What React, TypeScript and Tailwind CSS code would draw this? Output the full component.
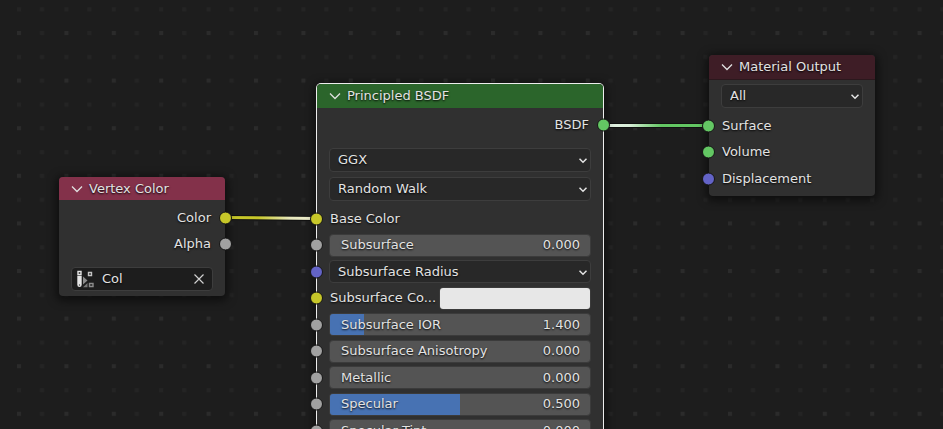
import React from "react";

type Tone = "yellow" | "gray" | "green" | "violet";

const toneClass: Record<Tone, string> = {
  yellow: "bg-[#c7c729]",
  gray: "bg-[#a1a1a1]",
  green: "bg-[#63c763]",
  violet: "bg-[#6363c7]",
};

function Socket({ tone, side }: { tone: Tone; side: "left" | "right" }) {
  return (
    <span
      className={`absolute top-1/2 size-[13px] -translate-y-1/2 rounded-full border border-[#151515] ${
        side === "left" ? "-left-[7px]" : "-right-[7px]"
      } ${toneClass[tone]}`}
    />
  );
}

function Header({ title, color }: { title: string; color: string }) {
  return (
    <header className={`flex items-center gap-1 pl-3 ${color}`}>
      <button type="button" aria-label={`Collapse ${title}`} className="flex size-3 items-center justify-center">
        <svg width="12" height="12" viewBox="0 0 12 12" fill="none" stroke="#e0e0e0" strokeWidth="1.3">
          <path d="M1 3.5 6 8.5 11 3.5" />
        </svg>
      </button>
      <h2 className="pl-[2px]">{title}</h2>
    </header>
  );
}

function Dropdown({ label, value, height }: { label: string; value: string; height: string }) {
  return (
    <div className="relative">
      <select
        aria-label={label}
        defaultValue={value}
        className={`block w-full appearance-none rounded border border-[#3d3d3d] bg-[#282828] pr-6 pl-2 outline-none text-shadow-[0_1px_2px_#000] ${height}`}
      >
        <option>{value}</option>
      </select>
      <svg
        className="pointer-events-none absolute top-1/2 right-1 -translate-y-1/2"
        width="8"
        height="8"
        viewBox="0 0 8 8"
        fill="none"
        stroke="#e6e6e6"
        strokeWidth="1.5"
      >
        <path d="M.5 2.7 4 6.2 7.5 2.7" />
      </svg>
    </div>
  );
}

function ValueField({ label, value, fill }: { label: string; value: string; fill: number }) {
  return (
    <label className="relative flex h-[23px] items-center overflow-hidden rounded border border-[#3b3b3b] bg-[#545454] pr-[10px] pl-[11px]">
      <span className="absolute inset-y-0 left-0 bg-[#4772b3]" style={{ width: `${fill}%` }} />
      <span className="relative flex-1 whitespace-nowrap">{label}</span>
      <input
        type="text"
        inputMode="decimal"
        defaultValue={value}
        className="relative w-12 bg-transparent text-right outline-none text-shadow-[0_1px_2px_#000]"
      />
    </label>
  );
}

const inputs: { tone: Tone; label: string; kind: "label" | "value" | "select" | "color"; value?: string; fill?: number }[] = [
  { tone: "yellow", label: "Base Color", kind: "label" },
  { tone: "gray", label: "Subsurface", kind: "value", value: "0.000", fill: 0 },
  { tone: "violet", label: "Subsurface Radius", kind: "select" },
  { tone: "yellow", label: "Subsurface Co...", kind: "color", value: "#e7e7e7" },
  { tone: "gray", label: "Subsurface IOR", kind: "value", value: "1.400", fill: 13 },
  { tone: "gray", label: "Subsurface Anisotropy", kind: "value", value: "0.000", fill: 0 },
  { tone: "gray", label: "Metallic", kind: "value", value: "0.000", fill: 0 },
  { tone: "gray", label: "Specular", kind: "value", value: "0.500", fill: 50 },
  { tone: "gray", label: "Specular Tint", kind: "value", value: "0.000", fill: 0 },
];

function InputRow({ row }: { row: (typeof inputs)[number] }) {
  return (
    <li className="relative flex items-center px-3 odd:h-[27px] even:h-[26px]">
      <Socket tone={row.tone} side="left" />
      <div className="w-full">
        {row.kind === "label" && <span className="block pl-px">{row.label}</span>}
        {row.kind === "value" && <ValueField label={row.label} value={row.value ?? ""} fill={row.fill ?? 0} />}
        {row.kind === "select" && <Dropdown label={row.label} value={row.label} height="h-[23px]" />}
        {row.kind === "color" && (
          <label className="flex items-center justify-between pl-px">
            {row.label}
            <input
              type="color"
              defaultValue={row.value}
              className="block h-[23px] w-[152px] appearance-none overflow-hidden rounded border border-[#3b3b3b] bg-[#e7e7e7] p-0 [&::-webkit-color-swatch]:border-0 [&::-webkit-color-swatch-wrapper]:p-0"
            />
          </label>
        )}
      </div>
    </li>
  );
}

function Canvas() {
  const dim = "#242424";
  return (
    <svg className="absolute inset-0 size-full" aria-hidden="true">
      <defs>
        <pattern id="dots" x="17" y="31" width="47.4" height="47.6" patternUnits="userSpaceOnUse">
          <rect width="4" height="4" fill="#2b2b2b" />
          <rect x="23" width="4" height="4" fill={dim} />
          <rect y="24" width="4" height="4" fill={dim} />
          <rect x="23" y="24" width="4" height="4" fill={dim} />
        </pattern>
        <linearGradient id="yellowLink" gradientUnits="userSpaceOnUse" x1="226" y1="0" x2="317" y2="0">
          <stop offset="0" stopColor="#c7c729" />
          <stop offset=".35" stopColor="#c7c729" />
          <stop offset=".7" stopColor="#e8e8bc" />
          <stop offset="1" stopColor="#eeeed0" />
        </linearGradient>
        <linearGradient id="greenLink" gradientUnits="userSpaceOnUse" x1="603" y1="0" x2="709" y2="0">
          <stop offset="0" stopColor="#e6f3e6" />
          <stop offset=".25" stopColor="#d8eed8" />
          <stop offset=".55" stopColor="#63c763" />
          <stop offset="1" stopColor="#63c763" />
        </linearGradient>
      </defs>
      <rect width="100%" height="100%" fill="url(#dots)" />
      <g fill="none">
        <path d="M226 217.5 317 218.5" stroke="#111" strokeWidth="5" />
        <path d="M226 217.5 317 218.5" stroke="url(#yellowLink)" strokeWidth="3" />
        <path d="M603 125.5H709" stroke="#111" strokeWidth="5" />
        <path d="M603 124h106v3H603z" fill="url(#greenLink)" />
      </g>
    </svg>
  );
}

const nodeShadow = "shadow-[0_2px_9px_3px_rgba(0,0,0,0.5)]";

export default function App() {
  return (
    <main className="relative h-screen overflow-hidden bg-[#1d1d1d] font-['DejaVu_Sans',sans-serif] text-[13px] leading-4 text-[#e3e3e3] text-shadow-[0_1px_2px_#000]">
      <Canvas />

      <section className={`absolute top-[177px] left-[59px] w-[166px] rounded bg-[#303030] pb-[5px] ${nodeShadow}`}>
        <Header title="Vertex Color" color="h-[23px] rounded-t bg-[#83314a]" />
        <ul className="pt-1">
          <li className="relative flex h-[27px] items-center justify-end pr-[14px]">
            Color
            <Socket tone="yellow" side="right" />
          </li>
          <li className="relative flex h-[26px] items-center justify-end pr-[14px]">
            Alpha
            <Socket tone="gray" side="right" />
          </li>
        </ul>
        <div className="mx-3 mt-[10px] flex h-6 items-center rounded border border-[#3d3d3d] bg-[#1d1d1d] pr-[5px] pl-1">
          <svg width="18" height="18" viewBox="0 0 18 18" fill="none" aria-hidden="true">
            <path d="M2 1.500h3v3H2z" stroke="#e6e6e6" strokeWidth="1.4" />
            <path d="M12.500 2.500h3v3h-3z" stroke="#c4c4c4" strokeWidth="1.4" />
            <path d="M13.500 13.500h3.500v3h-3.500z" stroke="#8c8c8c" strokeWidth="1.4" />
            <path d="M1.300 5.800h4.400v9a2.200 2.200 0 0 1-4.400 0z" fill="#e6e6e6" />
            <circle cx="3.500" cy="15" r=".7" fill="#444" />
            <path d="M7 6.500l4.500 4L7 14.500z" fill="#8c8c8c" />
            <path d="M7 17.200l4.500-4.200v4.200z" fill="#777" />
          </svg>
          <input aria-label="Color attribute" defaultValue="Col" className="w-0 flex-1 bg-transparent pl-2 outline-none text-shadow-[0_1px_2px_#000]" />
          <button type="button" aria-label="Clear attribute" className="flex size-4 items-center justify-center">
            <svg width="10" height="10" viewBox="0 0 10 10" stroke="#d0d0d0" strokeWidth="1.2">
              <path d="M.5.5 9.500 9.500M9.500.5.5 9.500" />
            </svg>
          </button>
        </div>
      </section>

      <section className={`absolute top-[84px] left-[317px] w-[286px] rounded bg-[#303030] pb-3 ring-1 ring-[#ededed] ${nodeShadow}`}>
        <Header title="Principled BSDF" color="h-6 rounded-t bg-[#2b652b]" />
        <div className="relative flex h-[34px] items-center justify-end pr-[14px]">
          BSDF
          <Socket tone="green" side="right" />
        </div>
        <div className="flex flex-col gap-[5px] px-3 pt-[6px]">
          <Dropdown label="Distribution" value="GGX" height="h-6" />
          <Dropdown label="Subsurface method" value="Random Walk" height="h-6" />
        </div>
        <ul className="pt-1">
          {inputs.map((row) => (
            <InputRow key={row.label} row={row} />
          ))}
        </ul>
      </section>

      <section className={`absolute top-[55px] left-[709px] w-[166px] rounded bg-[#303030] pb-1 ${nodeShadow}`}>
        <Header title="Material Output" color="h-[25px] rounded-t bg-[#3e1d26] border-b border-[#2b181d]" />
        <div className="px-3 pt-1">
          <Dropdown label="Target" value="All" height="h-6" />
        </div>
        <ul className="pt-1">
          {(
            [
              ["green", "Surface"],
              ["green", "Volume"],
              ["violet", "Displacement"],
            ] as [Tone, string][]
          ).map(([tone, label]) => (
            <li key={label} className="relative flex items-center pl-[13px] odd:h-[27px] even:h-[26px]">
              {label}
              <Socket tone={tone} side="left" />
            </li>
          ))}
        </ul>
      </section>
    </main>
  );
}
